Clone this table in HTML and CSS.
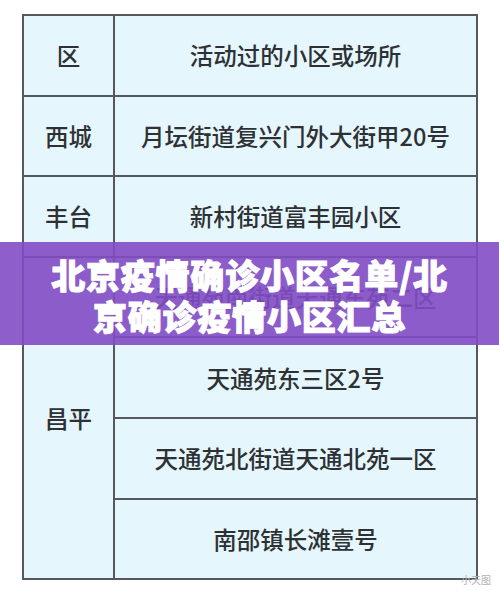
FILE: index.html
```html
<!DOCTYPE html>
<html lang="zh">
<head>
<meta charset="utf-8">
<title>北京疫情确诊小区名单</title>
<link rel="stylesheet" href="styles.css">
</head>
<body>
<div class="page">
  <table class="list">
    <tr><td class="district">区</td><td class="place">活动过的小区或场所</td></tr>
    <tr><td class="district">西城</td><td class="place">月坛街道复兴门外大街甲20号</td></tr>
    <tr><td class="district">丰台</td><td class="place">新村街道富丰园小区</td></tr>
    <tr><td class="district" rowspan="4">昌平</td><td class="place">天通苑南街道天通东苑二区</td></tr>
    <tr><td class="place">天通苑东三区2号</td></tr>
    <tr><td class="place">天通苑北街道天通北苑一区</td></tr>
    <tr><td class="place">南邵镇长滩壹号</td></tr>
  </table>
  <div class="banner"><h1 class="title">北京疫情确诊小区名单/北京确诊疫情小区汇总</h1></div>
  <span class="mark">小天图</span>
</div>
</body>
</html>
```
FILE: styles.css
```css
html, body {
  margin: 0;
  padding: 0;
  background: #ffffff;
}
.page {
  position: relative;
  width: 499px;
  height: 591px;
  overflow: hidden;
  font-family: "Noto Sans CJK SC", "Noto Sans", sans-serif;
}
.list {
  border-collapse: collapse;
  margin: 14px 0 0 22px;
  width: 456px;
  background: #e5f6fd;
  color: #2e3134;
}
.list td {
  border: 2px solid #55595c;
  height: 78.6px;
  padding: 0;
  text-align: center;
  vertical-align: middle;
  font-size: 23.5px;
  font-weight: 500;
  line-height: 30px;
}
.list .district {
  width: 89px;
}
.banner {
  position: absolute;
  left: 0;
  top: 242px;
  width: 499px;
  height: 103px;
  background: rgba(130, 76, 196, 0.9);
  display: flex;
  align-items: center;
  justify-content: center;
}
.title {
  margin: 0;
  width: 430px;
  color: #ffffff;
  font-size: 34px;
  font-weight: 900;
  line-height: 41px;
  text-align: center;
  letter-spacing: 0.8px;
  -webkit-text-stroke: 1px #ffffff;
  padding-top: 2px;
}
.mark {
  position: absolute;
  right: 8px;
  top: 572px;
  font-size: 10px;
  color: #b0b4b8;
}
```
